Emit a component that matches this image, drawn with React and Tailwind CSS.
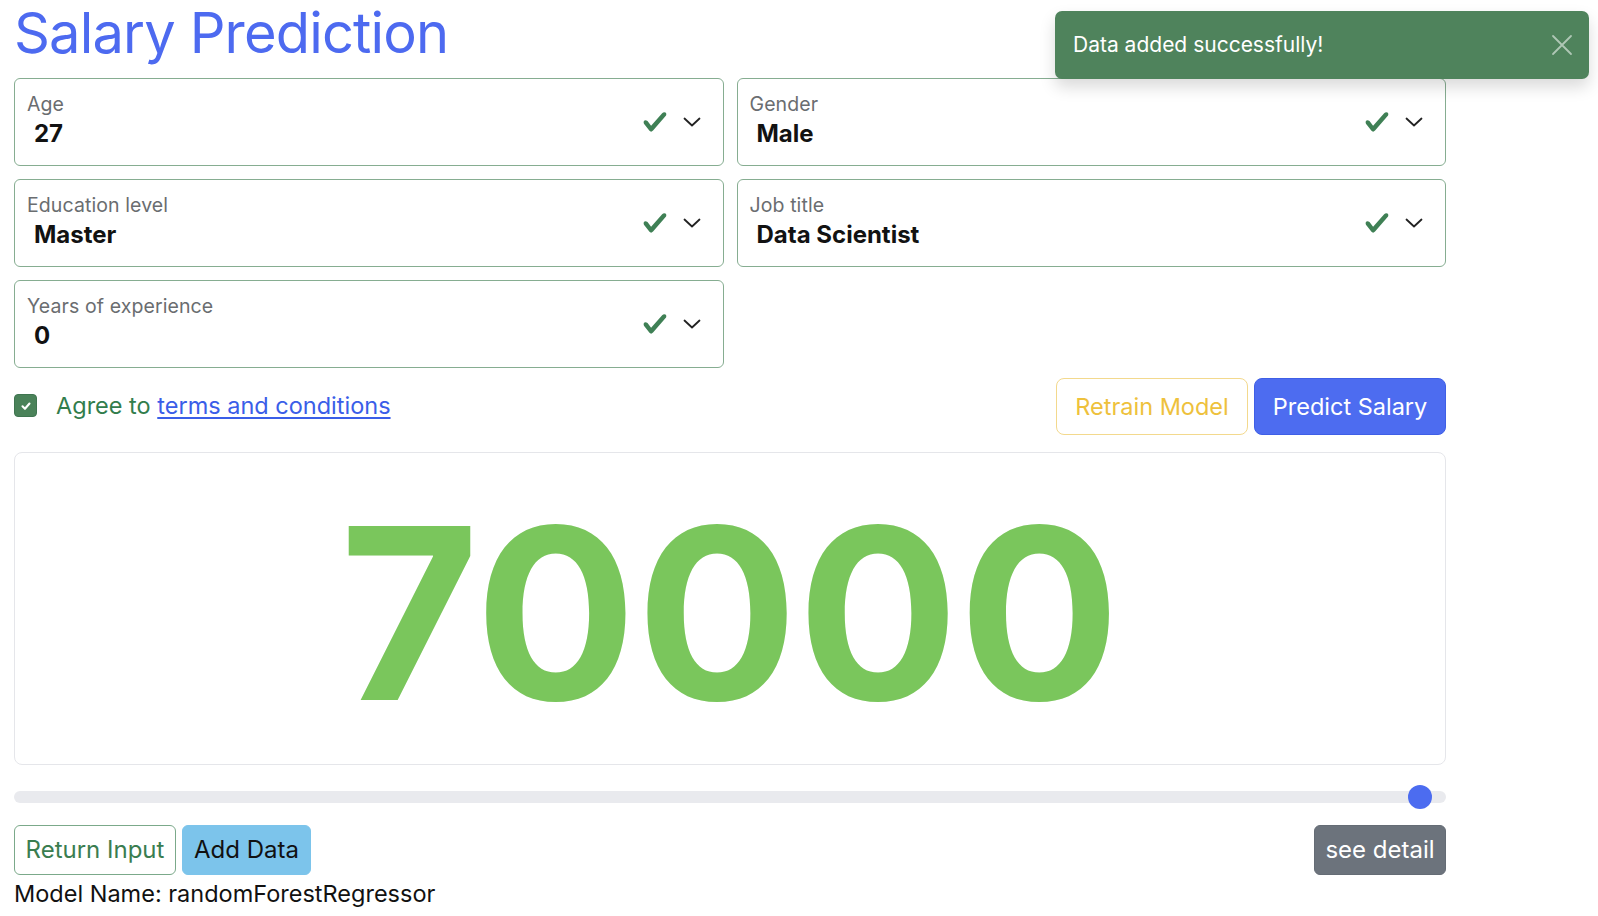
import React from "react";

function Check() {
  return (
    <svg width="26" height="26" viewBox="0 0 8 8" className="block">
      <path
        fill="#3f8055"
        d="M2.3 6.73L.6 4.53c-.4-1.04.46-1.4 1.1-.8l1.1 1.4 3.4-3.8c.6-.63 1.6-.27 1.2.7l-4 4.6c-.43.5-.8.4-1.1.1z"
      />
    </svg>
  );
}

function Chevron() {
  return (
    <svg width="18" height="10" viewBox="0 0 18 10" className="block">
      <path d="M1.5 1.5 L9 8.5 L16.5 1.5" fill="none" stroke="#222" strokeWidth="1.8" strokeLinecap="round" strokeLinejoin="round" />
    </svg>
  );
}

function Field({ label, value }) {
  return (
    <div className="h-[88px] rounded-[6px] border border-[#86ad91] bg-white flex items-start justify-between pl-[12px] pr-[22px] pt-[14px]">
      <div className="flex flex-col">
        <div className="text-[19.5px] leading-[22px] tracking-[0.005em] text-[#6a6d70]">{label}</div>
        <div className="mt-[4px] pl-[7px] text-[24px] leading-[30px] font-bold text-[#121212]">{value}</div>
      </div>
      <div className="flex items-center gap-[15px] self-center -mt-[14px]">
        <Check />
        <Chevron />
      </div>
    </div>
  );
}

export default function App() {
  return (
    <div className="relative min-h-[916px] w-[1598px] bg-white font-['Inter',sans-serif] overflow-hidden">
      <div className="ml-[14px] w-[1432px]">
        <h1 className="text-[56px] leading-[67px] font-normal text-[#4d6af0] tracking-[-0.015em] mb-[11px]">
          Salary Prediction
        </h1>
        <div className="grid grid-cols-2 gap-x-[13px] gap-y-[13px]">
          <Field label="Age" value="27" />
          <Field label="Gender" value="Male" />
          <Field label="Education level" value="Master" />
          <Field label="Job title" value="Data Scientist" />
          <Field label="Years of experience" value="0" />
        </div>
        <div className="mt-[10px] flex items-center justify-between h-[57px]">
          <div className="flex items-center -mt-[2px]">
            <div className="w-[23px] h-[23px] rounded-[4px] bg-[#4a8259] border border-[#3f7550] flex items-center justify-center">
              <svg width="14" height="14" viewBox="0 0 20 20">
                <path d="M5 10.5 L8.5 14 L15 6.5" fill="none" stroke="white" strokeWidth="3" strokeLinecap="round" strokeLinejoin="round" />
              </svg>
            </div>
            <span className="ml-[19px] text-[23.5px] leading-[30px] text-[#327d4c]">
              Agree to{" "}
              <a className="text-[#3a5ee8] underline underline-offset-[3px] decoration-[1.5px]">terms and conditions</a>
            </span>
          </div>
          <div className="flex gap-[6px]">
            <button className="w-[192px] h-[57px] rounded-[8px] border border-[#f3d98d] bg-white text-[#eec13c] text-[23.5px]">
              Retrain Model
            </button>
            <button className="w-[192px] h-[57px] rounded-[8px] border border-[#3f5fe6] bg-[#4d6cf0] text-white text-[23.5px]">
              Predict Salary
            </button>
          </div>
        </div>
        <div className="mt-[17px] h-[313px] rounded-[8px] border border-[#e5e6ea] flex items-center justify-center">
          <div className="text-[239px] leading-none font-bold text-[#7ac65c] mt-[10px]">70000</div>
        </div>
        <div className="relative mt-[26px] h-[12px] rounded-full bg-[#e9eaee]">
          <div className="absolute right-[14px] top-[-6px] w-[24px] h-[24px] rounded-full bg-[#4c6cf0]" />
        </div>
        <div className="mt-[22px] flex justify-between h-[50px]">
          <div className="flex gap-[6px]">
            <button className="w-[162px] h-[50px] rounded-[6px] border border-[#7ba98a] bg-white text-[#3a7d50] text-[24px]">
              Return Input
            </button>
            <button className="w-[129px] h-[50px] rounded-[6px] border border-[#7cc4eb] bg-[#7cc4eb] text-[#111] text-[24px]">
              Add Data
            </button>
          </div>
          <button className="w-[132px] h-[50px] rounded-[6px] bg-[#6c737c] border border-[#656c75] text-white text-[24px]">
            see detail
          </button>
        </div>
        <div className="mt-[5px] text-[23.5px] leading-[28px] text-[#111]">Model Name: randomForestRegressor</div>
      </div>

      <div className="absolute top-[11px] left-[1055px] w-[534px] h-[68px] rounded-[7px] bg-[#4f835c] shadow-[0_8px_16px_rgba(0,0,0,0.15)] flex items-center justify-between pl-[18px] pr-[16px]">
        <span className="text-[21px] text-white">Data added successfully!</span>
        <svg width="22" height="22" viewBox="0 0 22 22">
          <path d="M2 2 L20 20 M20 2 L2 20" stroke="rgba(255,255,255,0.55)" strokeWidth="1.8" strokeLinecap="round" />
        </svg>
      </div>
    </div>
  );
}
